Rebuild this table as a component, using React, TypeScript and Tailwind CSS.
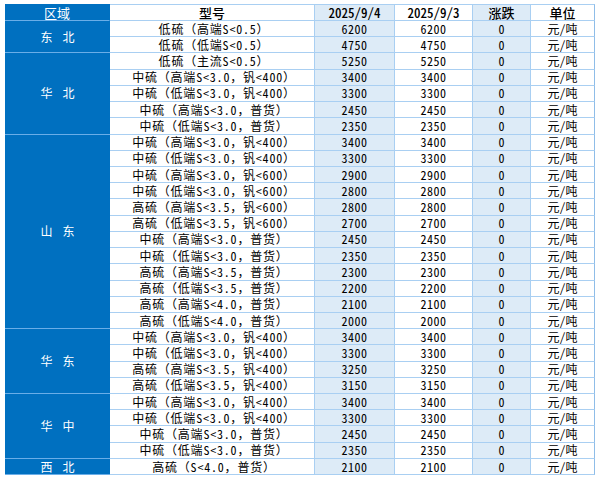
import React from "react";

type Row = { t: string; a: string; b: string };
type Group = { name: [string, string]; rows: Row[] };

const groups: Group[] = [
  {
    name: ["东", "北"],
    rows: [
      { t: "低硫（高端S<0.5）", a: "6200", b: "6200" },
      { t: "低硫（低端S<0.5）", a: "4750", b: "4750" },
    ],
  },
  {
    name: ["华", "北"],
    rows: [
      { t: "低硫（主流S<0.5）", a: "5250", b: "5250" },
      { t: "中硫（高端S<3.0，钒<400）", a: "3400", b: "3400" },
      { t: "中硫（低端S<3.0，钒<400）", a: "3300", b: "3300" },
      { t: "中硫（高端S<3.0，普货）", a: "2450", b: "2450" },
      { t: "中硫（低端S<3.0，普货）", a: "2350", b: "2350" },
    ],
  },
  {
    name: ["山", "东"],
    rows: [
      { t: "中硫（高端S<3.0，钒<400）", a: "3400", b: "3400" },
      { t: "中硫（低端S<3.0，钒<400）", a: "3300", b: "3300" },
      { t: "中硫（高端S<3.0，钒<600）", a: "2900", b: "2900" },
      { t: "中硫（低端S<3.0，钒<600）", a: "2800", b: "2800" },
      { t: "高硫（高端S<3.5，钒<600）", a: "2800", b: "2800" },
      { t: "高硫（低端S<3.5，钒<600）", a: "2700", b: "2700" },
      { t: "中硫（高端S<3.0，普货）", a: "2450", b: "2450" },
      { t: "中硫（低端S<3.0，普货）", a: "2350", b: "2350" },
      { t: "高硫（高端S<3.5，普货）", a: "2300", b: "2300" },
      { t: "高硫（低端S<3.5，普货）", a: "2200", b: "2200" },
      { t: "高硫（高端S<4.0，普货）", a: "2100", b: "2100" },
      { t: "高硫（低端S<4.0，普货）", a: "2000", b: "2000" },
    ],
  },
  {
    name: ["华", "东"],
    rows: [
      { t: "中硫（高端S<3.0，钒<400）", a: "3400", b: "3400" },
      { t: "中硫（低端S<3.0，钒<400）", a: "3300", b: "3300" },
      { t: "高硫（高端S<3.5，钒<400）", a: "3250", b: "3250" },
      { t: "高硫（低端S<3.5，钒<400）", a: "3150", b: "3150" },
    ],
  },
  {
    name: ["华", "中"],
    rows: [
      { t: "中硫（高端S<3.0，钒<400）", a: "3400", b: "3400" },
      { t: "中硫（低端S<3.0，钒<400）", a: "3300", b: "3300" },
      { t: "中硫（高端S<3.0，普货）", a: "2450", b: "2450" },
      { t: "中硫（低端S<3.0，普货）", a: "2350", b: "2350" },
    ],
  },
  {
    name: ["西", "北"],
    rows: [{ t: "高硫（S<4.0，普货）", a: "2100", b: "2100" }],
  },
];

const spanClass: Record<number, string> = {
  1: "row-span-1",
  2: "row-span-2",
  4: "row-span-4",
  5: "row-span-5",
  12: "row-span-12",
};

const cell =
  "flex items-center justify-center border-r border-b border-[#a9cff2] whitespace-nowrap leading-none overflow-hidden";

function T({ s }: { s: string }) {
  const parts = s.split(/([\x20-\x7e]+)/).filter((p) => p.length > 0);
  return (
    <span>
      {parts.map((p, i) =>
        /^[\x20-\x7e]+$/.test(p) ? (
          <span key={i} className="[font-feature-settings:'hwid']">
            {p}
          </span>
        ) : (
          <span key={i}>{p}</span>
        )
      )}
    </span>
  );
}

export default function App() {
  return (
    <div
      className="w-[600px] h-[477px] overflow-hidden bg-white pt-[4px] pl-[5px] text-black"
      style={{ fontFamily: '"Noto Sans CJK SC", "Noto Sans", sans-serif' }}
    >
      <div className="grid grid-cols-[105px_205px_80px_78px_58px_64px] grid-rows-[17px_repeat(28,16.222px)] text-[12px]">
        <div className={`${cell} bg-[#0070c0] text-white text-[13px] border-t border-t-[#0070c0] border-r-[#0070c0] border-b-[#6aaee8]`}>
          区域
        </div>
        <div className={`${cell} text-[13px] font-medium border-t`}>型号</div>
        <div className={`${cell} bg-[#ddebf7] text-[13px] font-medium border-t`}>
          <T s="2025/9/4" />
        </div>
        <div className={`${cell} text-[13px] font-medium border-t`}>
          <T s="2025/9/3" />
        </div>
        <div className={`${cell} bg-[#ddebf7] text-[13px] font-medium border-t`}>涨跌</div>
        <div className={`${cell} text-[13px] font-medium border-t border-r-[#8fbde8]`}>单位</div>
        {groups.map((g) => (
          <React.Fragment key={g.name.join("")}>
            {g.rows.map((r, i) => (
              <React.Fragment key={g.name.join("") + i}>
                {i === 0 && (
                  <div
                    className={`${spanClass[g.rows.length]} flex items-center justify-center gap-[10px] bg-[#0070c0] text-white border-b border-[#6aaee8] leading-none overflow-hidden`}
                  >
                    <span>{g.name[0]}</span>
                    <span>{g.name[1]}</span>
                  </div>
                )}
                <div className={`${cell} tracking-[0.8px] pl-[4px]`}>
                  <T s={r.t} />
                </div>
                <div className={`${cell} bg-[#ddebf7] tracking-[0.5px]`}>
                  <T s={r.a} />
                </div>
                <div className={`${cell} tracking-[0.5px]`}>
                  <T s={r.b} />
                </div>
                <div className={`${cell} bg-[#ddebf7]`}>
                  <T s="0" />
                </div>
                <div className={`${cell} border-r-[#8fbde8]`}>
                  <T s="元/吨" />
                </div>
              </React.Fragment>
            ))}
          </React.Fragment>
        ))}
      </div>
    </div>
  );
}
